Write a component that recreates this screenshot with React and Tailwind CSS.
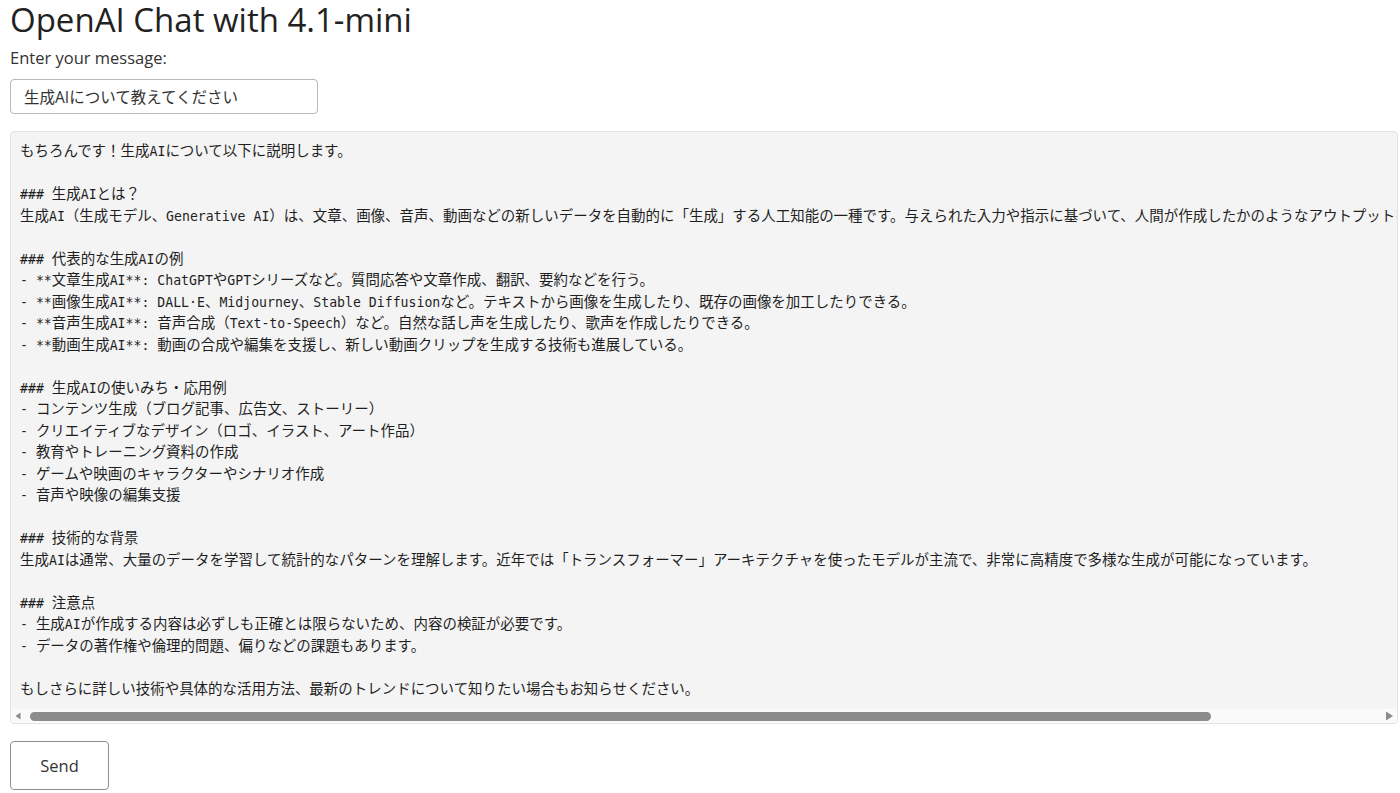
import React from "react";

const LINES = [
  "もちろんです！生成AIについて以下に説明します。",
  "",
  "### 生成AIとは？",
  "生成AI（生成モデル、Generative AI）は、文章、画像、音声、動画などの新しいデータを自動的に「生成」する人工知能の一種です。与えられた入力や指示に基づいて、人間が作成したかのようなアウトプットを生成することができます。",
  "",
  "### 代表的な生成AIの例",
  "- **文章生成AI**: ChatGPTやGPTシリーズなど。質問応答や文章作成、翻訳、要約などを行う。",
  "- **画像生成AI**: DALL·E、Midjourney、Stable Diffusionなど。テキストから画像を生成したり、既存の画像を加工したりできる。",
  "- **音声生成AI**: 音声合成（Text-to-Speech）など。自然な話し声を生成したり、歌声を作成したりできる。",
  "- **動画生成AI**: 動画の合成や編集を支援し、新しい動画クリップを生成する技術も進展している。",
  "",
  "### 生成AIの使いみち・応用例",
  "- コンテンツ生成（ブログ記事、広告文、ストーリー）",
  "- クリエイティブなデザイン（ロゴ、イラスト、アート作品）",
  "- 教育やトレーニング資料の作成",
  "- ゲームや映画のキャラクターやシナリオ作成",
  "- 音声や映像の編集支援",
  "",
  "### 技術的な背景",
  "生成AIは通常、大量のデータを学習して統計的なパターンを理解します。近年では「トランスフォーマー」アーキテクチャを使ったモデルが主流で、非常に高精度で多様な生成が可能になっています。",
  "",
  "### 注意点",
  "- 生成AIが作成する内容は必ずしも正確とは限らないため、内容の検証が必要です。",
  "- データの著作権や倫理的問題、偏りなどの課題もあります。",
  "",
  "もしさらに詳しい技術や具体的な活用方法、最新のトレンドについて知りたい場合もお知らせください。",
];

function renderLine(s) {
  const parts = s.split(/([\x20-\x7E\u00B7]+)/);
  return parts.map((p, i) =>
    /^[\x20-\x7E\u00B7]+$/.test(p) ? (
      <span key={i} className="font-['DejaVu_Sans_Mono',monospace] text-[13.2px]">
        {p}
      </span>
    ) : (
      <React.Fragment key={i}>{p}</React.Fragment>
    )
  );
}

export default function App() {
  return (
    <div className="pl-[10px] pr-[2px] font-['Open_Sans','Noto_Sans_CJK_JP',sans-serif] text-[#222]">
      <h1 className="text-[33px] leading-[40px] font-normal text-[#222]">
        OpenAI Chat with 4.1-mini
      </h1>
      <label className="mt-[6px] block text-[16.5px] leading-[24px] text-[#333]">
        Enter your message:
      </label>
      <input
        type="text"
        defaultValue="生成AIについて教えてください"
        className="mt-[9px] block h-[35px] w-[308px] rounded-[4px] border border-[#b8b8b8] bg-white px-[13px] text-[15.5px] text-[#333] outline-none font-['Open_Sans','Noto_Sans_CJK_JP',sans-serif]"
      />
      <div className="mt-[17px] overflow-hidden rounded-[4px] border border-[#e4e4e4] bg-[#f4f4f4]">
        <pre className="overflow-hidden whitespace-pre px-[9px] pt-[7px] pb-[11px] font-['Noto_Sans_CJK_JP',sans-serif] text-[14.48px] leading-[21.52px] text-[#1f1f1f]">
          {LINES.map((l, i) => (
            <div key={i} className="h-[21.52px]">
              {l === "" ? "\u00A0" : renderLine(l)}
            </div>
          ))}
        </pre>
        <div className="flex h-[14px] items-center bg-[#fafafa]">
          <svg className="ml-[3px] shrink-0" width="8" height="10" viewBox="0 0 8 10">
            <path d="M6.5 1.5 L1.5 5 L6.5 8.5 Z" fill="#8a8a8a" />
          </svg>
          <div className="ml-[8px] h-[9px] w-[1181px] shrink-0 rounded-full bg-[#8c8c8c]" />
          <div className="flex-1" />
          <svg className="mr-[3px] shrink-0" width="9" height="10" viewBox="0 0 9 10">
            <path d="M1 0.5 L8 5 L1 9.5 Z" fill="#8a8a8a" />
          </svg>
        </div>
      </div>
      <button
        type="button"
        className="mt-[17px] block h-[49px] w-[99px] rounded-[4px] border border-[#8f8f8f] bg-white text-[16.5px] text-[#333] font-['Open_Sans',sans-serif]"
      >
        Send
      </button>
    </div>
  );
}
